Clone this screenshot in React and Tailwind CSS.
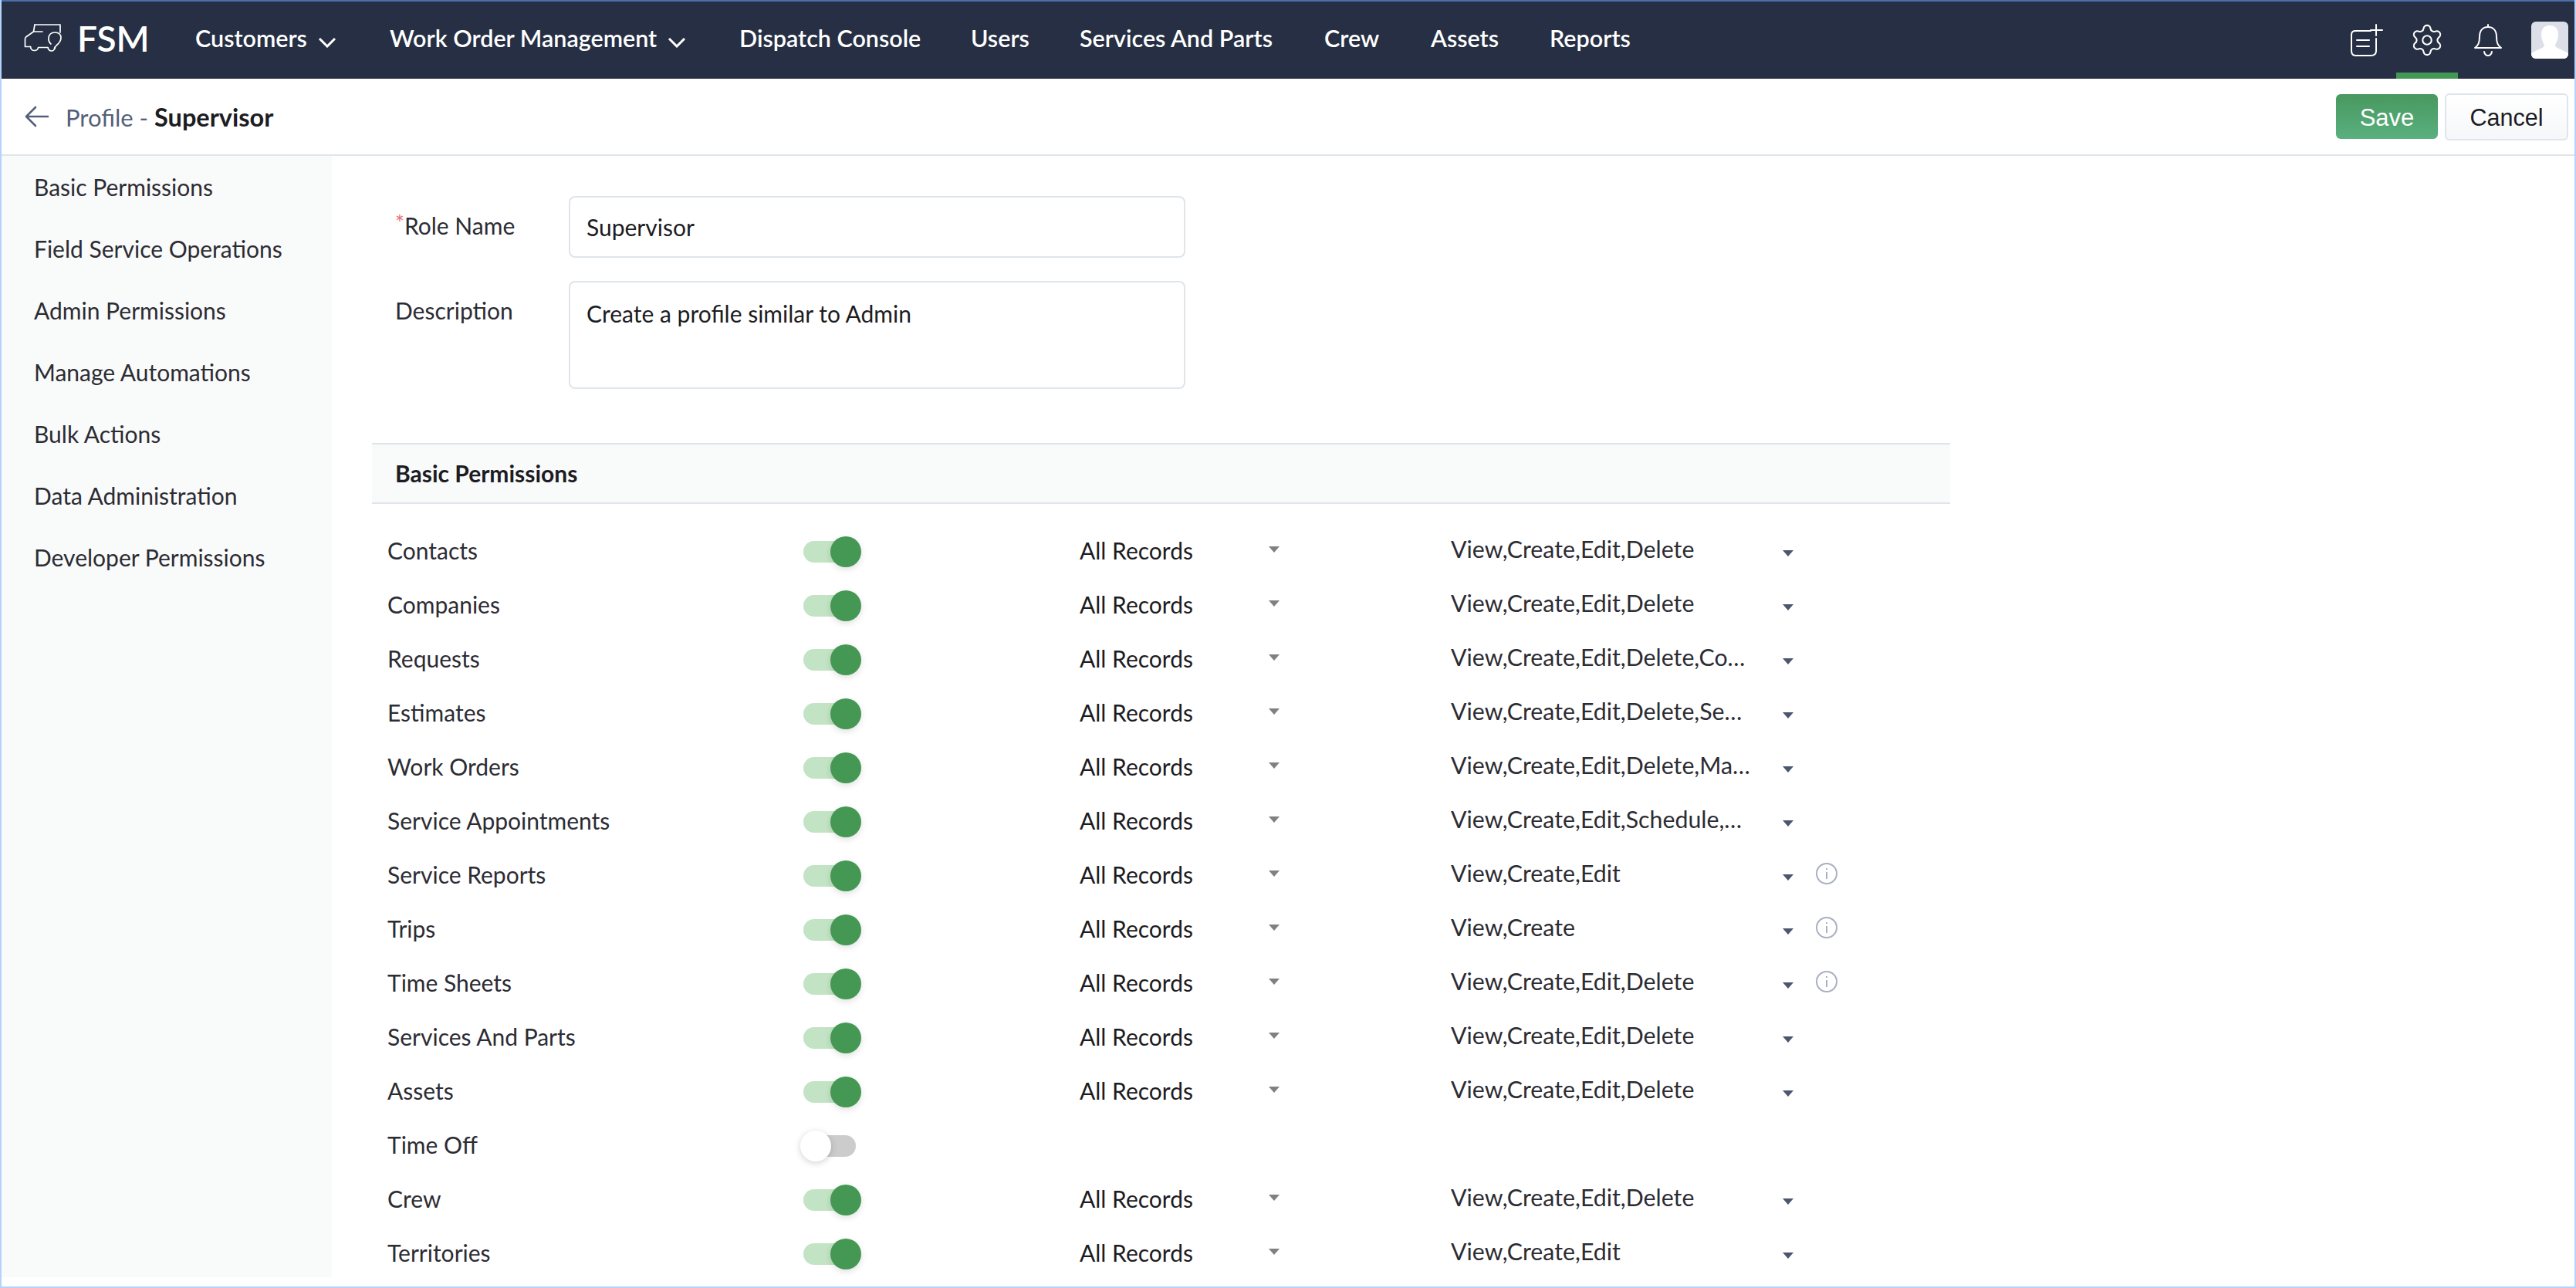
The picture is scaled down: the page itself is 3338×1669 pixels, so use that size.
import React from "react";
import { Settings } from "lucide-react";

const nav = [
  ["Customers", true, "w-[252px]"],
  ["Work Order Management", true, "w-[453px]"],
  ["Dispatch Console", false, "w-[300px]"],
  ["Users", false, "w-[141px]"],
  ["Services And Parts", false, "w-[317px]"],
  ["Crew", false, "w-[138px]"],
  ["Assets", false, "w-[154px]"],
  ["Reports", false, "w-[200px]"],
];
const side = ["Basic Permissions", "Field Service Operations", "Admin Permissions", "Manage Automations", "Bulk Actions", "Data Administration", "Developer Permissions"];
const VCED = "View,Create,Edit,Delete";
const rows = [
  ["Contacts", VCED],
  ["Companies", VCED],
  ["Requests", "View,Create,Edit,Delete,Co…"],
  ["Estimates", "View,Create,Edit,Delete,Se…"],
  ["Work Orders", "View,Create,Edit,Delete,Ma…"],
  ["Service Appointments", "View,Create,Edit,Schedule,…"],
  ["Service Reports", "View,Create,Edit", true],
  ["Trips", "View,Create", true],
  ["Time Sheets", VCED, true],
  ["Services And Parts", VCED],
  ["Assets", VCED],
  ["Time Off", null],
  ["Crew", VCED],
  ["Territories", "View,Create,Edit"],
];

function Logo() {
  return (
    <svg width="50" height="40" viewBox="0 0 50 40" fill="none" stroke="#fff" strokeWidth="1.7" strokeLinejoin="round" strokeLinecap="round" className="shrink-0">
      <path d="M15 2 H48 V12" />
      <path d="M15 2 L13.5 11 H25" />
      <path d="M13.5 11 L3.5 18 Q2.5 19 2.5 21 V30.5 H9.5" />
      <path d="M9.5 30.5 Q10 35.5 14.5 35.5 Q19 35.5 19.5 31.5 H32" />
      <path d="M32 31.5 Q33 36 36.7 36 Q40.5 36 41 31" />
      <path d="M36 27 Q32.5 24 33 19 Q34 12 41 12 Q49 12 49 19 Q49 24 43 29 Q41 31 41 33" />
    </svg>
  );
}
function Chevron() {
  return (
    <svg width="24" height="14" viewBox="0 0 24 14" fill="none" stroke="#fff" strokeWidth="3" className="ml-[14px] mt-[10px] shrink-0">
      <path d="M2 2 L12 12 L22 2" />
    </svg>
  );
}
function NoteIcon() {
  return (
    <svg width="42" height="42" viewBox="0 0 42 42" fill="none" stroke="#fff" strokeWidth="2" strokeLinecap="round">
      <path d="M26 9 H6 Q1 9 1 14 V35 Q1 41 7 41 H26 Q33 41 33 35 V19" />
      <path d="M8 21 H24 M8 29 H24" />
      <path d="M33 1 V15 M26 8 H41" />
    </svg>
  );
}
function BellIcon() {
  return (
    <svg width="36" height="42" viewBox="0 0 36 42" fill="none" stroke="#fff" strokeWidth="2" strokeLinecap="round" strokeLinejoin="round">
      <path d="M18 1 V4" />
      <path d="M18 4 C10 4 7 10 7 17 C7 25 5 28 1 31 H35 C31 28 29 25 29 17 C29 10 26 4 18 4 Z" />
      <path d="M13 36 Q14 41 18 41 Q22 41 23 36" />
    </svg>
  );
}
function Avatar() {
  return (
    <div className="w-[48px] h-[48px] rounded-[6px] bg-[#dcdfe8] overflow-hidden shrink-0">
      <svg width="48" height="48" viewBox="0 0 48 48" fill="#fff">
        <path d="M24 5 C32 5 35 10 35 17 C35 24 32 27 31 31 C31 34 40 36 48 41 V48 H0 V41 C8 36 17 34 17 31 C16 27 13 24 13 17 C13 10 16 5 24 5 Z" />
      </svg>
    </div>
  );
}
function Toggle({ on }) {
  return (
    <div className={on ? "relative w-[68px] h-[28px] rounded-full shrink-0 bg-[#c3e3c5] mt-[4px]" : "relative w-[68px] h-[28px] rounded-full shrink-0 bg-[#cccccc] mt-[4px]"}>
      <div className={on ? "absolute top-[-6px] left-[35px] w-[40px] h-[40px] rounded-full bg-[#459854] shadow-[0_3px_8px_rgba(0,0,0,0.12)]" : "absolute top-[-6px] left-[-4px] w-[40px] h-[40px] rounded-full bg-white shadow-[0_2px_8px_rgba(0,0,0,0.18)]"} />
    </div>
  );
}
function Caret({ dark }) {
  return (
    <svg width="16" height="10" viewBox="0 0 16 10" className="shrink-0">
      <path d="M1 1 H15 L8 9 Z" fill={dark ? "#4c566f" : "#808080"} />
    </svg>
  );
}
function Info() {
  return (
    <svg width="30" height="30" viewBox="0 0 30 30" fill="none" stroke="#a9afc2" strokeWidth="2" className="shrink-0">
      <circle cx="15" cy="15" r="13" />
      <path d="M15 13 V22 M15 8 V10" />
    </svg>
  );
}

function Row({ name, perm, info }) {
  return (
    <div className="flex items-center h-[70px]">
      <div className="w-[539px] pl-[20px] text-[#2c2c33] shrink-0">{name}</div>
      <div className="w-[378px] pl-[20px] shrink-0 flex items-center"><Toggle on={perm !== null} /></div>
      {perm !== null && (
        <>
          <div className="w-[244px] shrink-0 text-[#1c1c22]">All Records</div>
          <div className="w-[237px] shrink-0 mt-[-2px]"><Caret /></div>
          <div className="w-[429px] shrink-0 text-[#2c2c33] text-[30.3px] mt-[-2px] whitespace-nowrap">{perm}</div>
          <div className="w-[43px] shrink-0 mt-[8px]"><Caret dark /></div>
          {info && <div className="mt-[-2px]"><Info /></div>}
        </>
      )}
    </div>
  );
}

export default function App() {
  return (
    <div className="w-[3338px] h-[1669px] overflow-hidden bg-white border-x-2 border-b-2 border-x-[#b4d2fb] border-b-[#b4d2fb] text-[30px] text-[#222] font-['Lato',sans-serif] flex flex-col">
      <header className="h-[102px] shrink-0 bg-[#262f43] border-t-2 border-t-[#4a6ea8] flex items-center text-white">
        <div className="w-[251px] pl-[28px] mt-[-5px] flex items-center gap-[20px] shrink-0">
          <Logo />
          <span className="text-[46px] font-semibold leading-none">FSM</span>
        </div>
        <nav className="flex items-center h-full mt-[-5px]">
          {nav.map(([label, chev, w]) => (
            <div key={label} className={`${w} flex items-center shrink-0 text-[30.5px] font-semibold whitespace-nowrap`}>
              <span>{label}</span>
              {chev && <Chevron />}
            </div>
          ))}
        </nav>
        <div className="ml-auto h-full flex items-center pr-[8px]">
          <NoteIcon />
          <div className="relative w-[80px] h-full ml-[17px] mr-[21px] flex items-center justify-center">
            <Settings size={46} strokeWidth={1.1} color="#fff" />
            <div className="absolute bottom-0 left-0 right-0 h-[8px] bg-[#459854]" />
          </div>
          <BellIcon />
          <div className="ml-[38px]"><Avatar /></div>
        </div>
      </header>

      <div className="h-[100px] shrink-0 border-b-2 border-[#dfe5ea] flex items-center pl-[30px] pr-[8px]">
        <svg width="32" height="28" viewBox="0 0 32 28" fill="none" stroke="#555f7b" strokeWidth="2.6" strokeLinecap="round" strokeLinejoin="round" className="shrink-0">
          <path d="M30 14 H2 M14 2 L2 14 L14 26" />
        </svg>
        <div className="ml-[21px] text-[32.5px] mt-[2px] whitespace-nowrap">
          <span className="text-[#555f7b] text-[31px]">Profile - </span>
          <span className="font-bold text-[#1c1c22]">Supervisor</span>
        </div>
        <div className="ml-auto flex items-center gap-[9px] font-['Liberation_Sans',sans-serif] text-[31px]">
          <button className="w-[132px] h-[58px] pt-[4px] rounded-[6px] text-white bg-gradient-to-b from-[#48985f] to-[#5ab07f]">Save</button>
          <button className="w-[160px] h-[61px] pt-[4px] rounded-[6px] text-[#1c1c22] text-[30.5px] border-2 border-[#dfe5ea] bg-gradient-to-b from-white to-[#f5f7fa]">Cancel</button>
        </div>
      </div>

      <div className="flex flex-1 min-h-0">
        <aside className="w-[428px] h-[1453px] shrink-0 bg-[#f9fafa] pl-[42px]">
          {side.map((s) => (
            <div key={s} className="h-[80px] flex items-center text-[#2c2c33] whitespace-nowrap">{s}</div>
          ))}
        </aside>
        <main className="flex-1 min-w-0 pl-[52px]">
          <div className="w-[2045px]">
            <div className="pl-[30px] pt-[52px] flex">
              <div className="w-[225px] h-[76px] flex items-center shrink-0">
                <span className="text-[#e57373] text-[28px] self-start mt-[14px]">*</span>
                <span className="text-[#2c2c33]">Role Name</span>
              </div>
              <div className="w-[799px] h-[80px] rounded-[8px] border-2 border-[#dfe5ea] pl-[21px] pt-[1px] flex items-center text-[#1c1c22]">Supervisor</div>
            </div>
            <div className="pl-[30px] pt-[30px] flex">
              <div className="w-[225px] h-[76px] flex items-center shrink-0 text-[#2c2c33]">Description</div>
              <div className="w-[799px] h-[140px] rounded-[8px] border-2 border-[#dfe5ea] pl-[21px] pt-[18px] text-[#1c1c22]">Create a profile similar to Admin</div>
            </div>
            <div className="mt-[70px] h-[79px] bg-[#f9fafa] border-y-2 border-[#dfe5ea] flex items-center pl-[30px] font-bold text-[#1c1c22]">Basic Permissions</div>
            <div className="pt-[25px]">
              {rows.map(([name, perm, info], i) => (
                <Row key={i} name={name} perm={perm} info={info} />
              ))}
            </div>
          </div>
        </main>
      </div>
    </div>
  );
}
